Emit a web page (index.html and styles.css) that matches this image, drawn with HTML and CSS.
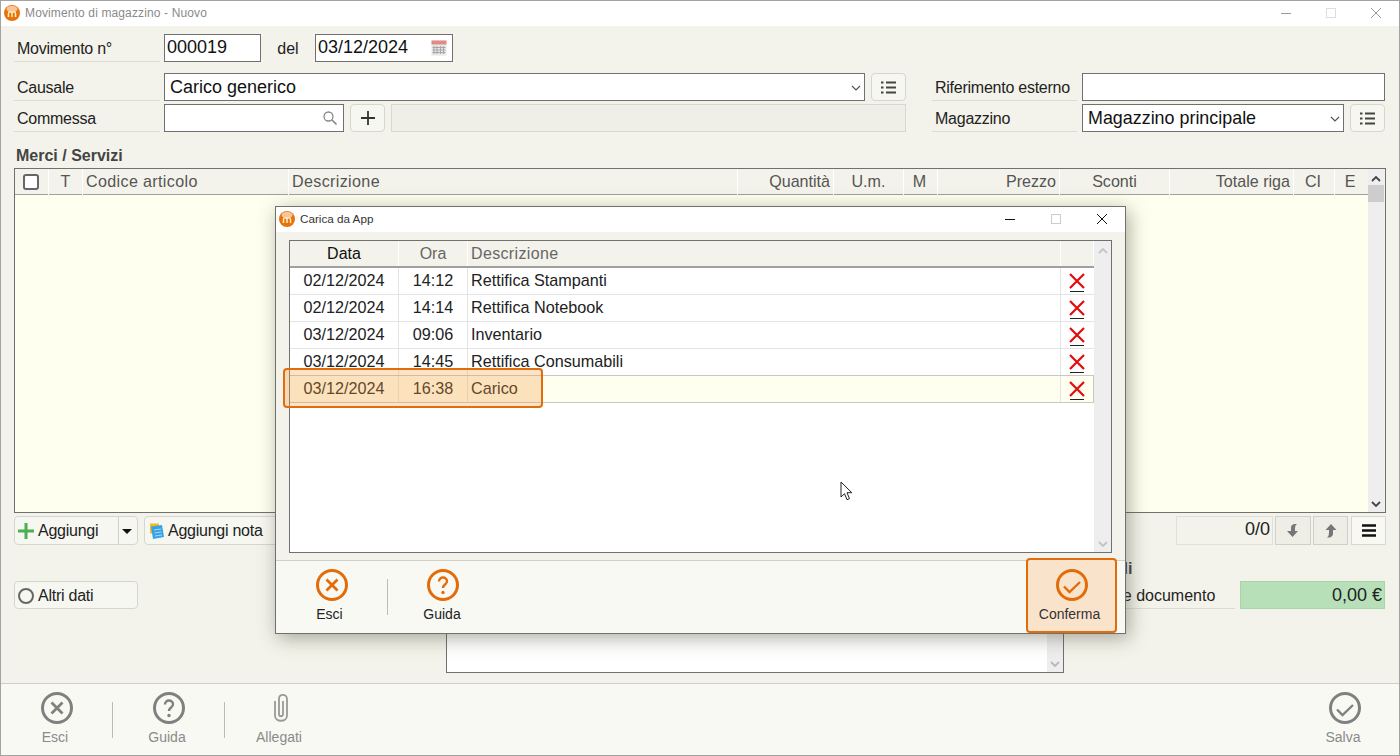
FILE: index.html
```html
<!DOCTYPE html>
<html lang="it">
<head>
<meta charset="utf-8">
<title>Movimento di magazzino - Nuovo</title>
<link rel="stylesheet" href="styles.css">
</head>
<body>
<svg class="defs" width="0" height="0" aria-hidden="true">
  <symbol id="i-x" viewBox="0 0 32 32"><circle cx="16" cy="16" r="14.5" fill="none" stroke="currentColor" stroke-width="3"/><path d="M10.500 10.500l11 11M21.500 10.500l-11 11" fill="none" stroke="currentColor" stroke-width="2.800"/></symbol>
  <symbol id="i-q" viewBox="0 0 32 32"><circle cx="16" cy="16" r="14.5" fill="none" stroke="currentColor" stroke-width="3"/><path d="M12 12.500c0-2.500 1.800-4 4-4s4 1.500 4 3.700c0 3.300-4 3.300-4 6.800" fill="none" stroke="currentColor" stroke-width="2.400"/><circle cx="16" cy="23.500" r="1.700" fill="currentColor"/></symbol>
  <symbol id="i-ok" viewBox="0 0 32 32"><circle cx="16" cy="16" r="14.500" fill="none" stroke="currentColor" stroke-width="3"/><path d="M8 17.500l5.500 5.500L24 13" fill="none" stroke="currentColor" stroke-width="2.400"/></symbol>
  <symbol id="i-list" viewBox="0 0 15 13"><path d="M0 1.500h2.500M5 1.500h10M0 6.500h2.500M5 6.500h10M0 11.500h2.500M5 11.500h10" fill="none" stroke="#444" stroke-width="2"/></symbol>
  <symbol id="i-del" viewBox="0 0 16 19"><path d="M1 1l14 14M15 1L1 15" fill="none" stroke="#e30b0b" stroke-width="2.200"/><path d="M1 18.500h14" stroke="#222" stroke-width="1"/></symbol>
  <symbol id="i-logo" viewBox="0 0 16 16"><circle cx="8" cy="8" r="8" fill="#e8720c"/><ellipse cx="8" cy="4" rx="5.500" ry="3.200" fill="#f9c49a"/><path d="M4.500 12V8.500c0-2.200 3.500-2.200 3.500 0V12M8 8.500c0-2.200 3.500-2.200 3.500 0V12" fill="none" stroke="#ffeeb8" stroke-width="1.500"/></symbol>
  <symbol id="i-chev" viewBox="0 0 10 6"><path d="M1 1l4 4 4-4" fill="none" stroke="#555" stroke-width="1.200"/></symbol>
</svg>

<div class="window">
  <header class="titlebar">
    <svg class="logo"><use href="#i-logo"/></svg>
    <span class="title">Movimento di magazzino - Nuovo</span>
    <div class="caption faded">
      <svg class="cap" viewBox="0 0 12 12"><path d="M1 6.500h10" stroke="#999"/></svg>
      <svg class="cap" viewBox="0 0 12 12"><rect x="1.500" y="1.500" width="9" height="9" fill="none" stroke="#ddd"/></svg>
      <svg class="cap" viewBox="0 0 12 12"><path d="M1 1l10 10M11 1L1 11" stroke="#999"/></svg>
    </div>
  </header>

  <main class="content">
    <div class="row row-first">
      <label class="lbl">Movimento n°</label>
      <div class="field f-num">000019</div>
      <span class="del">del</span>
      <div class="field f-date">03/12/2024
        <svg class="cal" viewBox="0 0 16 16"><rect x="0.500" y="0.500" width="15" height="15" fill="#e8e8e8"/><rect x="0.500" y="0.500" width="15" height="4" fill="#e28b86"/><path d="M3 6v8M6 6v8M9.500 6v8M12.500 6v8M1.500 7.500h13M1.500 10h13M1.500 12.500h13" stroke="#a8a8a8"/></svg>
      </div>
    </div>
    <div class="row">
      <label class="lbl">Causale</label>
      <div class="field f-causale big">Carico generico<svg class="chev"><use href="#i-chev"/></svg></div>
      <button class="tool"><svg class="ico-list"><use href="#i-list"/></svg></button>
      <label class="lbl lbl-r">Riferimento esterno</label>
      <div class="field f-rif"></div>
    </div>
    <div class="row row-third">
      <label class="lbl">Commessa</label>
      <div class="field f-comm">
        <svg class="search" viewBox="0 0 14 14"><circle cx="5.500" cy="5.500" r="4.500" fill="none" stroke="#888" stroke-width="1.300"/><path d="M9 9l4.500 4.500" stroke="#888" stroke-width="1.600"/></svg>
      </div>
      <button class="tool"><svg class="plus" viewBox="0 0 16 16"><path d="M8 1v14M1 8h14" stroke="#333" stroke-width="1.800"/></svg></button>
      <div class="readonly"></div>
      <label class="lbl lbl-r">Magazzino</label>
      <div class="field f-mag big">Magazzino principale<svg class="chev"><use href="#i-chev"/></svg></div>
      <button class="tool"><svg class="ico-list"><use href="#i-list"/></svg></button>
    </div>

    <h2 class="section">Merci / Servizi</h2>
    <section class="grid">
      <div class="grid-main">
        <div class="grid-head">
          <div class="hc c"><span class="check"></span></div>
          <div class="hc c">T</div>
          <div class="hc wide">Codice articolo</div>
          <div class="hc wide">Descrizione</div>
          <div class="hc r">Quantità</div>
          <div class="hc c">U.m.</div>
          <div class="hc c hc-m">M</div>
          <div class="hc r">Prezzo</div>
          <div class="hc c">Sconti</div>
          <div class="hc r">Totale riga</div>
          <div class="hc c hc-end">CI</div>
          <div class="hc c hc-end">E</div>
        </div>
        <div class="grid-body"></div>
      </div>
      <div class="vscroll">
        <svg class="sb-up" viewBox="0 0 10 6"><path d="M1 5l4-4 4 4" fill="none" stroke="#444" stroke-width="1.800"/></svg>
        <div class="thumb"></div>
        <svg class="sb-down" viewBox="0 0 10 6"><path d="M1 1l4 4 4-4" fill="none" stroke="#444" stroke-width="1.800"/></svg>
      </div>
    </section>

    <div class="actions">
      <div class="btn split">
        <svg class="plus-g" viewBox="0 0 16 16"><path d="M8 0v16M0 8h16" stroke="#4caf50" stroke-width="3"/></svg>
        <span class="split-label">Aggiungi</span>
        <span class="split-arrow"></span>
      </div>
      <div class="btn note">
        <svg class="note-ico" viewBox="0 0 16 16"><rect x="1" y="0.500" width="9" height="10" fill="#f5b921"/><path d="M2 3.500l11-1.500 2 12-11 2z" fill="#35a3e8"/><path d="M5 7l7-1M5.500 10l7-1M6 13l7-1" stroke="#a9d8f5"/></svg>
        Aggiungi nota
      </div>
      <div class="spacer"></div>
      <div class="pager">0/0</div>
      <button class="navbtn"><svg viewBox="0 0 12 14"><path d="M4 3Q4 1 7 0h3Q8 1 8 4v3h3l-5.500 6L0 7h4z" fill="#777"/></svg></button>
      <button class="navbtn nav-up"><svg viewBox="0 0 12 14"><path d="M6 0l5.500 6H8v4q0 2-3 3.500H2q2-1.500 2-4.500V6H.5z" fill="#777"/></svg></button>
      <button class="menubtn"><svg viewBox="0 0 14 13"><path d="M0 1.500h14M0 6.500h14M0 11.500h14" stroke="#111" stroke-width="2.400"/></svg></button>
    </div>

    <div class="lower">
      <div class="btn altri"><span class="radio"></span>Altri dati</div>
      <div class="memo">
        <div class="memo-sb"><svg class="sb-down" viewBox="0 0 10 6"><path d="M1 1l4 4 4-4" fill="none" stroke="#b8b8b8" stroke-width="1.800"/></svg></div>
      </div>
      <div class="totals">
        <h2 class="section tot-h">Totali</h2>
        <div class="tot-row">
          <label class="lbl tot-l">Totale documento</label>
          <div class="tot-v">0,00 €</div>
        </div>
      </div>
    </div>
  </main>

  <footer class="bar">
    <button class="cmd grey"><svg class="cmd-ico"><use href="#i-x"/></svg><span>Esci</span></button>
    <button class="cmd grey sep"><svg class="cmd-ico"><use href="#i-q"/></svg><span>Guida</span></button>
    <button class="cmd grey sep"><svg class="cmd-ico clip" viewBox="0 0 32 32"><path d="M10 9v14.500c0 7 12 7 12 0V7c0-5.500-8-5.500-8 0v15c0 3 4 3 4 0V9" fill="none" stroke="currentColor" stroke-width="1.800"/></svg><span>Allegati</span></button>
    <div class="spacer"></div>
    <button class="cmd grey salva"><svg class="cmd-ico"><use href="#i-ok"/></svg><span>Salva</span></button>
  </footer>

  <section class="dialog">
    <header class="dlg-title">
      <svg class="logo"><use href="#i-logo"/></svg>
      <span class="dlg-name">Carica da App</span>
      <div class="caption">
        <svg class="cap" viewBox="0 0 12 12"><path d="M1 6.500h10" stroke="#111"/></svg>
        <svg class="cap" viewBox="0 0 12 12"><rect x="1.500" y="1.500" width="9" height="9" fill="none" stroke="#ccc"/></svg>
        <svg class="cap" viewBox="0 0 12 12"><path d="M1 1l10 10M11 1L1 11" stroke="#111"/></svg>
      </div>
    </header>
    <div class="dlg-body">
      <div class="dlg-list">
        <div class="dlg-main">
          <div class="dlg-row dlg-head">
            <div class="dc c strong">Data</div>
            <div class="dc c">Ora</div>
            <div class="dc wide">Descrizione</div>
            <div class="dc"></div>
          </div>
          <div class="dlg-row"><div class="dc c">02/12/2024</div><div class="dc c">14:12</div><div class="dc">Rettifica Stampanti</div><div class="dc c"><svg class="del-ico"><use href="#i-del"/></svg></div></div>
          <div class="dlg-row"><div class="dc c">02/12/2024</div><div class="dc c">14:14</div><div class="dc">Rettifica Notebook</div><div class="dc c"><svg class="del-ico"><use href="#i-del"/></svg></div></div>
          <div class="dlg-row"><div class="dc c">03/12/2024</div><div class="dc c">09:06</div><div class="dc">Inventario</div><div class="dc c"><svg class="del-ico"><use href="#i-del"/></svg></div></div>
          <div class="dlg-row"><div class="dc c">03/12/2024</div><div class="dc c">14:45</div><div class="dc">Rettifica Consumabili</div><div class="dc c"><svg class="del-ico"><use href="#i-del"/></svg></div></div>
          <div class="dlg-row selected"><div class="dc c">03/12/2024</div><div class="dc c">16:38</div><div class="dc">Carico</div><div class="dc c"><svg class="del-ico"><use href="#i-del"/></svg></div></div>
        </div>
        <div class="dlg-sb">
          <svg class="sb-up" viewBox="0 0 10 6"><path d="M1 5l4-4 4 4" fill="none" stroke="#c4c4c4" stroke-width="1.800"/></svg>
          <svg class="sb-down" viewBox="0 0 10 6"><path d="M1 1l4 4 4-4" fill="none" stroke="#c4c4c4" stroke-width="1.800"/></svg>
        </div>
      </div>
    </div>
    <footer class="dlg-foot">
      <button class="cmd orange"><svg class="cmd-ico"><use href="#i-x"/></svg><span>Esci</span></button>
      <button class="cmd orange sep"><svg class="cmd-ico"><use href="#i-q"/></svg><span>Guida</span></button>
      <div class="spacer"></div>
      <button class="cmd orange confirm"><svg class="cmd-ico"><use href="#i-ok"/></svg><span>Conferma</span></button>
    </footer>
  </section>

  <div class="callout"></div>
  <svg class="cursor" viewBox="0 0 13 20"><path d="M1 1v15l3.500-3.300 2.500 6 2.500-1-2.500-6h4.800z" fill="#fff" stroke="#222"/></svg>
</div>
</body>
</html>
```
FILE: styles.css
```css
* { box-sizing: border-box; }
html, body { margin: 0; padding: 0; }
body { width: 1400px; height: 756px; overflow: hidden; font-family: "Liberation Sans", Arial, sans-serif; font-size: 16px; color: #222; background: #666; }
.defs { position: absolute; }
button { font: inherit; padding: 0; margin: 0; background: none; border: 0; color: inherit; }
.spacer { flex: 1; }
.wide { letter-spacing: .35px; }

.window { position: relative; width: 1400px; height: 756px; display: flex; flex-direction: column; background: #f4f3eb; border: 1px solid #a3a3a3; }

.titlebar { height: 25px; flex: none; background: #fff; display: flex; align-items: center; padding: 0 0 2px 3px; }
.logo { width: 16px; height: 16px; flex: none; }
.title { margin-left: 5px; font-size: 12px; color: #8a8a8a; letter-spacing: .13px; }
.caption { margin-left: auto; display: flex; height: 100%; align-items: center; }
.cap { width: 12px; height: 12px; margin-left: 33px; }
.titlebar .caption { padding-right: 17px; }
.titlebar .cap:first-child { margin-left: 0; }

.content { flex: 1; display: flex; flex-direction: column; padding: 8px 13px 0; min-height: 0; }
.row { display: flex; height: 28px; flex: none; }
.row-first { margin-bottom: 11px; }
.row-third { margin-top: 3px; }
.lbl { width: 146px; flex: none; height: 28px; line-height: 30px; padding-left: 3px; border-bottom: 1px solid #dcdcd4; margin-right: 4px; letter-spacing: -.25px; }
.lbl-r { width: 145px; margin-left: 26px; margin-right: 5px; }
.field { position: relative; height: 28px; background: #fff; border: 1px solid #707070; font-size: 18px; line-height: 25px; padding-left: 2px; color: #111; }
.big { padding-left: 5px; line-height: 27px; }
.f-num { width: 97px; }
.del { width: 54px; text-align: center; line-height: 29px; }
.f-date { width: 138px; }
.cal { position: absolute; right: 5px; top: 5px; width: 16px; height: 16px; }
.f-causale { width: 701px; }
.f-rif { width: 303px; }
.f-comm { width: 180px; }
.f-mag { width: 262px; font-size: 17.9px; }
.chev { position: absolute; right: 3px; top: 11px; width: 10px; height: 6px; }
.search { position: absolute; right: 6px; top: 6px; width: 14px; height: 14px; }
.tool { width: 35px; height: 28px; margin-left: 6px; flex: none; background: #f7f7f1; border: 1px solid #d6d6ce; border-radius: 4px; display: flex; align-items: center; justify-content: center; }
.ico-list { width: 15px; height: 13px; }
.plus { width: 16px; height: 16px; }
.readonly { width: 515px; margin-left: 6px; background: #efefe7; border: 1px solid #d8d8d0; }

.section { margin: 15px 0 3px; font-size: 16px; line-height: 18px; font-weight: bold; color: #444; padding-left: 2px; }

.grid { flex: none; height: 345px; display: flex; border: 1px solid #707070; padding-right: 1px; }
.grid-main { flex: 1; display: flex; flex-direction: column; min-width: 0; }
.grid-head { height: 26px; flex: none; display: grid; grid-template-columns: 34px 34px 206px 449px 96px 70px 34px 122px 110px 124px 41px 32px; border-bottom: 1px solid #a0a0a0; }
.hc { border-right: 1px solid #fff; padding: 0 3px 0 3px; line-height: 25px; color: #555; white-space: nowrap; font-size: 16.1px; }
.hc:last-child { border-right: 0; }
.hc-m { padding-right: 5px; }
.hc-end { padding-right: 5px; }
.c { text-align: center; }
.r { text-align: right; }
.check { display: inline-block; width: 16px; height: 16px; margin: 5px 2px 0 0; border: 2px solid #666; border-radius: 3px; background: #fff; }
.grid-body { flex: 1; background: #fffff0; }
.vscroll { width: 16px; flex: none; background: #eee; display: flex; flex-direction: column; align-items: center; }
.sb-up, .sb-down { width: 10px; height: 6px; flex: none; }
.sb-up { margin-top: 7px; }
.thumb { width: 100%; height: 17px; margin-top: 3px; background: #cdcdcd; }
.sb-down { margin-top: auto; margin-bottom: 5px; }

.actions { display: flex; height: 29px; flex: none; margin-top: 3px; }
.btn { height: 29px; background: #f7f7f1; border: 1px solid #d6d6ce; border-radius: 4px; display: flex; align-items: center; color: #222; letter-spacing: -.25px; }
.split { width: 124px; }
.plus-g { width: 16px; height: 16px; margin-left: 3px; margin-right: 4px; }
.split-label { width: 80px; }
.split-arrow { height: 100%; flex: 1; border-left: 1px solid #d0d0c8; position: relative; }
.split-arrow::after { content: ""; position: absolute; left: 3px; top: 12px; border: 5px solid transparent; border-top: 5px solid #111; border-bottom: 0; }
.note { width: 180px; margin-left: 6px; padding-left: 4px; }
.note-ico { width: 16px; height: 16px; margin-right: 3px; }
.pager { width: 97px; height: 29px; border: 1px solid #e0e0d8; text-align: right; line-height: 25px; font-size: 18px; padding-right: 2px; color: #222; }
.navbtn { width: 36px; height: 29px; margin-left: 2px; background: #eeeee6; border: 1px solid #d0d0c8; display: flex; align-items: center; justify-content: center; }
.nav-up { width: 35px; }
.navbtn svg { width: 12px; height: 14px; }
.menubtn { width: 35px; height: 29px; margin-left: 3px; background: #f9f9f4; border: 1px solid #d8d8d0; display: flex; align-items: center; justify-content: center; }
.menubtn svg { width: 14px; height: 13px; }

.lower { flex: 1; display: flex; align-items: flex-start; position: relative; min-height: 0; }
.altri { width: 124px; height: 28px; margin-top: 36px; padding-top: 1px; flex: none; }
.radio { width: 16px; height: 16px; margin: 0 4px 0 3px; border: 2px solid #666; border-radius: 50%; }
.memo { width: 618px; height: 108px; margin: 20px 0 0 308px; flex: none; border: 1px solid #707070; background: #fff; display: flex; justify-content: flex-end; }
.memo-sb { width: 16px; background: #eee; display: flex; flex-direction: column; align-items: center; }
.totals { margin-left: 21px; width: 300px; flex: none; }
.tot-h { margin: 15px 0 3px; color: #444; padding-left: 6px; }
.tot-row { display: flex; }
.tot-l { width: 150px; margin-right: 5px; padding-left: 4px; letter-spacing: 0; }
.tot-v { width: 145px; height: 28px; background: #b7e0b8; border: 1px solid #a6d6a8; text-align: right; line-height: 27px; font-size: 18px; padding-right: 2px; color: #222; }

.bar { height: 72px; flex: none; display: flex; border-top: 1px solid #d0d0c8; background: #f9f9f4; }
.cmd { width: 112px; height: 100%; display: flex; flex-direction: column; align-items: center; font-size: 14px; position: relative; }
.cmd-ico { width: 32px; height: 32px; margin-top: 8px; }
.cmd span { margin: 5px 4px 0 0; line-height: 16px; }
.grey { color: #8a8a8a; }
.grey .cmd-ico { color: #808080; }
.grey .clip { color: #999; }
.orange { color: #222; }
.orange .cmd-ico { color: #e36c0a; }
.sep::before { content: ""; position: absolute; left: -1px; top: 18px; height: 36px; width: 1px; background: #bbb; }
.salva { width: 108px; }

.dialog { position: absolute; left: 274px; top: 205px; width: 851px; height: 428px; display: flex; flex-direction: column; background: #f4f3eb; border: 1px solid #707070; box-shadow: 3px 4px 18px rgba(70, 70, 50, .45); }
.dlg-title { height: 25px; flex: none; background: #fff; display: flex; align-items: center; padding: 0 0 2px 3px; }
.dlg-name { margin-left: 5px; font-size: 11.7px; color: #333; }
.dlg-title .caption { padding-right: 17px; }
.dlg-title .cap:first-child { margin-left: 0; }
.dlg-title .cap { margin-left: 34px; }
.dlg-body { flex: 1; padding: 8px 13px 7px; min-height: 0; }
.dlg-list { height: 100%; display: flex; border: 1px solid #707070; background: #fff; }
.dlg-main { flex: 1; min-width: 0; }
.dlg-row { height: 27px; display: grid; grid-template-columns: 109px 69px 593px 33px; border-bottom: 1px solid #e4e4e4; line-height: 24px; color: #222; font-size: 16.2px; }
.dc { border-right: 1px solid #e4e4e4; padding-left: 3px; white-space: nowrap; overflow: hidden; }
.dc.c { padding-left: 0; }
.dc:last-child { border-right: 0; }
.dlg-head { background: #f4f3eb; border-bottom: 2px solid #a0a0a0; line-height: 25px; color: #666; font-size: 16px; }
.dlg-head .dc { border-right: 1px solid #fff; }
.strong { color: #111; }
.selected { height: 28px; margin-top: -1px; background: #fffff0; border: 1px solid #c8c8c0; border-left: 0; }
.del-ico { width: 16px; height: 19px; margin: 5px 0 0 8px; display: block; }
.dlg-sb { width: 17px; flex: none; background: #eee; display: flex; flex-direction: column; align-items: center; }
.dlg-foot { height: 73px; flex: none; display: flex; background: #f9f9f4; border-top: 1px solid #d0d0c8; }
.dlg-foot .cmd { width: 111px; }
.dlg-foot .sep::before { left: 0; }
.dlg-foot .sep span { margin-right: 1px; }
.dlg-foot .confirm { width: 91px; height: 75px; margin: -3px 8px 0 0; background: #fae3cb; border: 2px solid #e36c0a; border-radius: 4px; }
.confirm .cmd-ico { margin-top: 9px; }
.confirm span { color: #333; }

.callout { position: absolute; left: 282px; top: 367px; width: 260px; height: 40px; border: 2px solid #e36c0a; border-radius: 4px; background: rgba(246, 160, 70, .3); }
.cursor { position: absolute; left: 839px; top: 480px; width: 13px; height: 20px; }
```
